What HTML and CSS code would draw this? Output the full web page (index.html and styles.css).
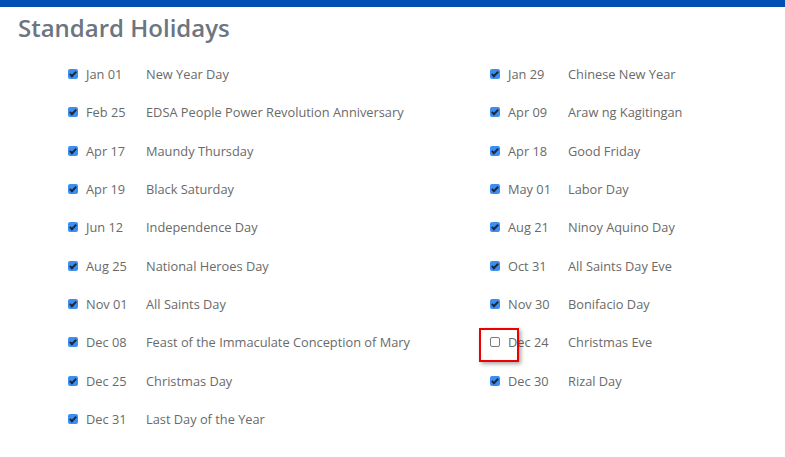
FILE: index.html
```html
<!DOCTYPE html>
<html>
<head>
<meta charset="utf-8">
<link rel="stylesheet" href="styles.css">
</head>
<body>
<div class="topbar"></div>
<h1 class="title">Standard Holidays</h1>
<div class="grid">
  <div class="col">
    <label class="row"><span class="cb on"></span><span class="date">Jan 01</span><span class="name">New Year Day</span></label>
    <label class="row"><span class="cb on"></span><span class="date">Feb 25</span><span class="name">EDSA People Power Revolution Anniversary</span></label>
    <label class="row"><span class="cb on"></span><span class="date">Apr 17</span><span class="name">Maundy Thursday</span></label>
    <label class="row"><span class="cb on"></span><span class="date">Apr 19</span><span class="name">Black Saturday</span></label>
    <label class="row"><span class="cb on"></span><span class="date">Jun 12</span><span class="name">Independence Day</span></label>
    <label class="row"><span class="cb on"></span><span class="date">Aug 25</span><span class="name">National Heroes Day</span></label>
    <label class="row"><span class="cb on"></span><span class="date">Nov 01</span><span class="name">All Saints Day</span></label>
    <label class="row"><span class="cb on"></span><span class="date">Dec 08</span><span class="name">Feast of the Immaculate Conception of Mary</span></label>
    <label class="row"><span class="cb on"></span><span class="date">Dec 25</span><span class="name">Christmas Day</span></label>
    <label class="row"><span class="cb on"></span><span class="date">Dec 31</span><span class="name">Last Day of the Year</span></label>
  </div>
  <div class="col">
    <label class="row"><span class="cb on"></span><span class="date">Jan 29</span><span class="name">Chinese New Year</span></label>
    <label class="row"><span class="cb on"></span><span class="date">Apr 09</span><span class="name">Araw ng Kagitingan</span></label>
    <label class="row"><span class="cb on"></span><span class="date">Apr 18</span><span class="name">Good Friday</span></label>
    <label class="row"><span class="cb on"></span><span class="date">May 01</span><span class="name">Labor Day</span></label>
    <label class="row"><span class="cb on"></span><span class="date">Aug 21</span><span class="name">Ninoy Aquino Day</span></label>
    <label class="row"><span class="cb on"></span><span class="date">Oct 31</span><span class="name">All Saints Day Eve</span></label>
    <label class="row"><span class="cb on"></span><span class="date">Nov 30</span><span class="name">Bonifacio Day</span></label>
    <label class="row"><span class="cb off"><span class="highlight"></span></span><span class="date">Dec 24</span><span class="name">Christmas Eve</span></label>
    <label class="row"><span class="cb on"></span><span class="date">Dec 30</span><span class="name">Rizal Day</span></label>
  </div>
</div>
</body>
</html>
```
FILE: styles.css
```css
html, body {
  margin: 0;
  padding: 0;
  background: #fff;
}
body {
  font-family: "Open Sans", "Liberation Sans", sans-serif;
  color: #6a6a6a;
}
.topbar {
  height: 7px;
  background: #0050b4;
}
.title {
  margin: 4px 0 0 18px;
  font-size: 24px;
  font-weight: 600;
  line-height: 33px;
  color: #6c7580;
}
.grid {
  display: grid;
  grid-template-columns: 422px 1fr;
  padding-left: 68px;
  margin-top: 11px;
}
.col {
  display: flex;
  flex-direction: column;
}
.row {
  display: flex;
  align-items: center;
  height: 38.33px;
  font-size: 12.8px;
}
.cb {
  position: relative;
  width: 10px;
  height: 10px;
  box-sizing: border-box;
  border-radius: 2px;
  margin-right: 8px;
  flex: none;
}
.cb.on {
  background: #3d8ef2;
}
.cb.on::after {
  content: "";
  position: absolute;
  left: 3px;
  top: 1px;
  width: 2px;
  height: 5px;
  border: solid #1e2a38;
  border-width: 0 2px 2px 0;
  transform: rotate(45deg);
}
.cb.off {
  border: 1px solid #7a7a7a;
  background: #fff;
}
.highlight {
  position: absolute;
  left: -12px;
  top: -10px;
  width: 40px;
  height: 34px;
  box-sizing: border-box;
  border: 2px solid #ee0000;
  box-shadow: 2px 2px 4px rgba(0, 0, 0, 0.35);
}
.date {
  width: 60px;
  flex: none;
}
.name {
  white-space: nowrap;
}
```
